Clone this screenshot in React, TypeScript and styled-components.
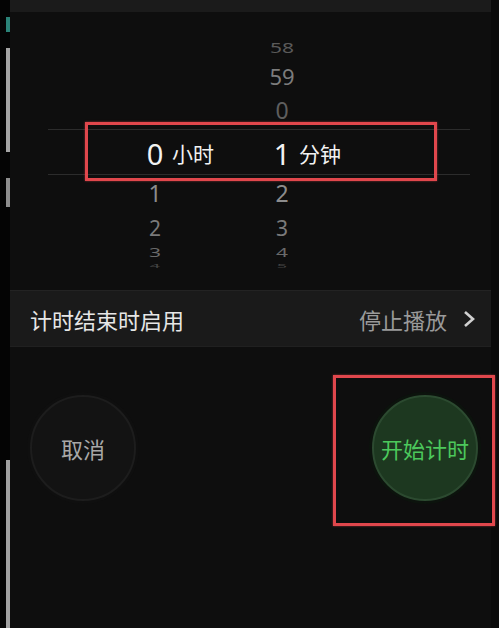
import styled, { createGlobalStyle } from "styled-components";

const GlobalStyle = createGlobalStyle`
  html, body {
    margin: 0;
    padding: 0;
    background: #0a0a0a;
  }
  body {
    font-family: "Noto Sans", "Noto Sans CJK SC", sans-serif;
  }
`;

type Row = {
  h: number;
  size: number;
  scale?: number;
  color: string;
  hour?: string;
  minute?: string;
  selected?: boolean;
};

const rows: Row[] = [
  { h: 28, size: 21, scale: 0.65, color: "#5a5a5a", minute: "58" },
  { h: 28, size: 22, color: "#7c7c7c", minute: "59" },
  { h: 40, size: 23, color: "#5e5e5e", minute: "0" },
  { h: 46, size: 29, color: "#f2f2f2", hour: "0", minute: "1", selected: true },
  { h: 34, size: 23, color: "#8c8c8c", hour: "1", minute: "2" },
  { h: 36, size: 21, color: "#7a7a7a", hour: "2", minute: "3" },
  { h: 12, size: 21, scale: 0.6, color: "#6a6a6a", hour: "3", minute: "4" },
  { h: 16, size: 18, scale: 0.3, color: "#444", hour: "4", minute: "5" }
];

const App = () => {
  return (
    <>
      <GlobalStyle />
      <Screen>
        <LeftEdge>
          <EdgeMark $h={17} />
          <EdgeMark $h={15} $color="#2b8378" />
          <EdgeMark $h={16} />
          <EdgeMark $h={104} $color="#a4a4a4" />
          <EdgeMark $h={26} />
          <EdgeMark $h={29} $color="#8e8e8e" />
          <EdgeMark $h={253} />
          <EdgeMark $h={168} $color="#a0a0a0" />
        </LeftEdge>
        <Main>
          <TopStrip />
          <Picker>
            <Band />
            <Wheel>
              {rows.map((row, index) => (
                <WheelRow key={index} $h={row.h}>
                  <Num $size={row.size} $scale={row.scale} $color={row.color}>
                    {row.hour ?? ""}
                  </Num>
                  <Unit>{row.selected ? "小时" : ""}</Unit>
                </WheelRow>
              ))}
            </Wheel>
            <Wheel>
              {rows.map((row, index) => (
                <WheelRow key={index} $h={row.h}>
                  <Num $size={row.size} $scale={row.scale} $color={row.color}>
                    {row.minute ?? ""}
                  </Num>
                  <Unit>{row.selected ? "分钟" : ""}</Unit>
                </WheelRow>
              ))}
            </Wheel>
          </Picker>
          <OptionRow>
            <OptionLabel>计时结束时启用</OptionLabel>
            <OptionValue>
              停止播放
              <svg width="16" height="20" viewBox="0 0 16 20">
                <polyline points="4,3 12,10 4,17" fill="none" stroke="#d0d0d0" strokeWidth="2.6" />
              </svg>
            </OptionValue>
          </OptionRow>
          <Actions>
            <RoundButton $variant="cancel">取消</RoundButton>
            <RoundButton $variant="start">开始计时</RoundButton>
          </Actions>
        </Main>
        <Highlight style={{ left: 85, top: 122, width: 352, height: 59 }} />
        <Highlight style={{ left: 333, top: 375, width: 162, height: 151 }} />
      </Screen>
    </>
  );
};

const Screen = styled.div`
  position: relative;
  width: 499px;
  height: 628px;
  display: flex;
  overflow: hidden;
  background: #0a0a0a;
`;

const LeftEdge = styled.div`
  width: 10px;
  flex-shrink: 0;
  display: flex;
  flex-direction: column;
  align-items: flex-end;
  background: #040404;
`;

const EdgeMark = styled.div<{ $h: number; $color?: string }>`
  height: ${props => props.$h}px;
  width: 4px;
  flex-shrink: 0;
  background: ${props => props.$color || "transparent"};
`;

const Main = styled.div`
  flex: 1;
  margin-right: 8px;
  display: flex;
  flex-direction: column;
  background: #0e0e0e;
`;

const TopStrip = styled.div`
  height: 12px;
  background: #1b1b1b;
`;

const Picker = styled.div`
  position: relative;
  height: 278px;
  padding: 22px 0 0 130px;
  box-sizing: border-box;
  display: flex;
  gap: 50px;
`;

const Band = styled.div`
  position: absolute;
  left: 38px;
  right: 21px;
  top: 117px;
  height: 44px;
  border-top: 1px solid #2c2c2c;
  border-bottom: 1px solid #2c2c2c;
`;

const Wheel = styled.div`
  position: relative;
  width: 77px;
  display: flex;
  flex-direction: column;
`;

const WheelRow = styled.div<{ $h: number }>`
  height: ${props => props.$h}px;
  display: flex;
  align-items: center;
  gap: 2px;
`;

const Num = styled.span<{ $size: number; $scale?: number; $color: string }>`
  width: 30px;
  flex-shrink: 0;
  text-align: center;
  font-size: ${props => props.$size}px;
  line-height: 1;
  color: ${props => props.$color};
  transform: scaleY(${props => props.$scale ?? 1});
`;

const Unit = styled.span`
  font-size: 21px;
  line-height: 1;
  color: #f2f2f2;
  font-family: "Noto Sans CJK SC", sans-serif;
  white-space: nowrap;
`;

const OptionRow = styled.div`
  height: 57px;
  box-sizing: border-box;
  display: flex;
  align-items: center;
  justify-content: space-between;
  padding: 0 14px 0 20px;
  background: #1a1a1a;
  border-top: 1px solid #232323;
  border-bottom: 1px solid #202020;
`;

const OptionLabel = styled.span`
  font-family: "Noto Sans CJK SC", sans-serif;
  font-size: 22px;
  color: #e6e6e6;
`;

const OptionValue = styled.span`
  display: flex;
  align-items: center;
  gap: 14px;
  font-family: "Noto Sans CJK SC", sans-serif;
  font-size: 22px;
  color: #9a9a9a;
`;

const Actions = styled.div`
  flex: 1;
  display: flex;
  align-items: flex-start;
  justify-content: space-between;
  padding: 48px 13px 0 20px;
`;

const RoundButton = styled.div<{ $variant: "cancel" | "start" }>`
  width: 106px;
  height: 106px;
  border-radius: 50%;
  box-sizing: border-box;
  display: flex;
  align-items: center;
  justify-content: center;
  font-family: "Noto Sans CJK SC", sans-serif;
  font-size: 22px;
  background: ${props => (props.$variant === "start" ? "#1d3820" : "#131313")};
  border: 2px solid ${props => (props.$variant === "start" ? "#2c4a30" : "#1d1d1d")};
  box-shadow: 0 0 0 3px ${props => (props.$variant === "start" ? "#0c130d" : "#0f0f0f")};
  color: ${props => (props.$variant === "start" ? "#4cc85c" : "#a8a8a8")};
`;

const Highlight = styled.div`
  position: absolute;
  box-sizing: border-box;
  border: 3px solid #e0474c;
  box-shadow: 0 0 2px rgba(224, 71, 76, 0.6);
  pointer-events: none;
`;

export default App;
